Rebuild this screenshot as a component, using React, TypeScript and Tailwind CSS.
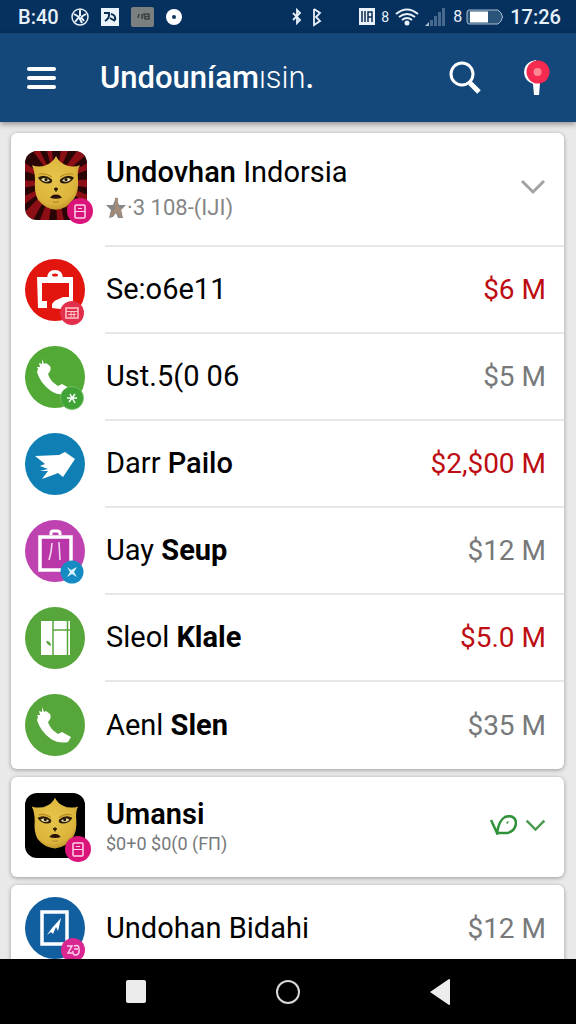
import type { ReactNode } from "react"
import clsx from "clsx"

type Item = {
  name: ReactNode
  amount: string
  due?: boolean
  icon: ReactNode
}

function MaskFace({ striped }: { striped?: boolean }) {
  return (
    <svg viewBox="0 0 62 68" preserveAspectRatio="none" className="block size-full" aria-hidden="true">
      <defs>
        <radialGradient id="gold" cx="45%" cy="40%" r="65%">
          <stop offset="0" stopColor="#e6c54a" />
          <stop offset="0.75" stopColor="#dcb43c" />
          <stop offset="1" stopColor="#b98c24" />
        </radialGradient>
      </defs>
      <rect width="62" height="68" fill={striped ? "#2a0506" : "#000"} />
      {striped && (
        <g fill="#8c0f16">
          <path d="M30 30 L8 0 L15 0Z" />
          <path d="M30 30 L22 0 L27 0Z" />
          <path d="M30 30 L36 0 L43 0Z" />
          <path d="M30 30 L52 0 L62 0 L62 3Z" />
          <path d="M30 30 L62 12 L62 19Z" />
          <path d="M30 30 L62 28 L62 36Z" />
          <path d="M30 30 L62 43 L62 52Z" />
          <path d="M30 30 L56 68 L47 68Z" />
          <path d="M30 30 L39 68 L32 68Z" />
          <path d="M30 30 L24 68 L15 68Z" />
          <path d="M30 30 L8 68 L0 66 L0 60Z" />
          <path d="M30 30 L0 52 L0 44Z" />
          <path d="M30 30 L0 36 L0 29Z" />
          <path d="M30 30 L0 20 L0 12Z" />
        </g>
      )}
      <path
        d="M7 14 Q16 17 23 13 Q28 11 31 5 Q34 11 39 13 Q46 17 55 14 Q52 19 53 28 Q54 40 49 47 Q42 57 31 58 Q20 57 13 48 Q9 41 10 29 Q10 20 7 14Z"
        fill="url(#gold)"
      />
      <path d="M14 23 Q21 21 27 26 M48 23 Q41 21 35 26" stroke="#b98a22" strokeWidth="1.200" fill="none" />
      <path d="M13 26 Q20 22 27 28 Q28 32 23 32 Q16 32 13 26Z M49 26 Q42 22 35 28 Q34 32 39 32 Q46 32 49 26Z" fill="#2b1c08" />
      <path d="M16 28 Q20 25 25 29 Q20 32 16 28Z M46 28 Q42 25 37 29 Q42 32 46 28Z" fill="#ecdda4" />
      <circle cx="21" cy="28" r="1.500" fill="#17100a" />
      <circle cx="41" cy="28" r="1.500" fill="#17100a" />
      <path d="M31 36 v4 M29 37.500 h4" stroke="#2b1c08" strokeWidth="1.800" />
      <path d="M25 46 Q28 42 31 43 Q34 42 37 46 Q31 48 25 46Z" fill="#2a1208" />
      <path d="M28 50 Q31 51 34 50" stroke="#b08424" fill="none" />
    </svg>
  )
}

function Disc({ fill, children }: { fill: string; children: ReactNode }) {
  return (
    <svg viewBox="0 0 60 64" className="block h-16 w-[60px] overflow-visible" aria-hidden="true">
      <ellipse cx="30" cy="31" rx="30" ry="31" fill={fill} />
      {children}
    </svg>
  )
}

function BriefcaseIcon() {
  return (
    <Disc fill="#e2150f">
      <path d="M22 20 Q22 11 30 11 Q38 11 38 20Z" fill="#fff" />
      <ellipse cx="30" cy="16" rx="3" ry="1.500" fill="#e2150f" />
      <path d="M12 18 H48 V44 Q41 49 35 50 L27 49 V43 L38 38 H44 V24 H17 V42 H22 V49 H13Z" fill="#fff" />
      <path d="M17 24 H44 V36 L37 38 L31 40 L27 45 L24 42 H17Z" fill="#e2150f" />
      <circle cx="47" cy="54" r="12" fill="#e2304c" />
      <rect x="41" y="49" width="12" height="10" fill="none" stroke="#ffc3c8" strokeWidth="1.500" />
      <path d="M41 52.500 h12 M43 55.500 h8 M46 53 v5 M49 53 v5" stroke="#ffc3c8" strokeWidth="1" />
    </Disc>
  )
}

const handset =
  "M17 13 L19 18 L21 17 L25 20 Q27 24 23 28 Q25 35 33 40 L37 38 L46 43 L43 48 Q34 50 26 45 Q15 37 12 26 L13 23 L12 21 L15 21 L14 17 L17 18Z"

function PhoneIcon({ badge }: { badge?: boolean }) {
  return (
    <Disc fill={badge ? "#52a935" : "#57a63c"}>
      <path d={handset} fill="#fff" />
      {badge && (
        <>
          <circle cx="47" cy="52" r="11.500" fill="#3fa435" stroke="#7cc26c" strokeWidth="0.800" />
          <path d="M42 52 h10 M45 48 l5 9 M50 48 l-6 8" stroke="#fff" strokeWidth="1.500" />
        </>
      )}
    </Disc>
  )
}

function PlaneIcon() {
  return (
    <Disc fill="#107fb5">
      <path d="M10 23 L34 22 L40 19 L50 26 L38 44 L33 40 L28 42 L17 46 L23 38 L15 38 L23 36 L15 33 L20 31Z" fill="#fff" />
    </Disc>
  )
}

function BagIcon() {
  return (
    <Disc fill="#be43b0">
      <path d="M26 15 V13 Q26 11 28 11 H32 Q35 11 35 13 V15" fill="none" stroke="#fff" strokeWidth="3" />
      <rect x="15" y="17" width="31" height="33" fill="#b836a8" stroke="#fff" strokeWidth="3.500" />
      <path d="M27 23 L26 32 L24 40 M34 22 L35 40" fill="none" stroke="#f2d6ef" strokeWidth="1.600" />
      <circle cx="47" cy="52" r="11.500" fill="#168bc3" />
      <path d="M42 47 L46 50 L52 47 L49 52 L52 57 L47 54 L42 57 L45 52Z" fill="#d9f2ff" />
    </Disc>
  )
}

function DoorIcon() {
  return (
    <Disc fill="#57a63c">
      <path d="M16 14 H45 V48 H16Z" fill="#fff" />
      <path d="M28 14 V48 M28 23 H45 M42.500 14 V48" stroke="#57a63c" strokeWidth="1.500" />
      <path d="M21 34 Q26 34 26 39 Q22 38 21 34Z" fill="#57a63c" />
    </Disc>
  )
}

function TabletIcon() {
  return (
    <Disc fill="#115f9f">
      <rect x="17" y="15" width="25" height="32" fill="#115f9f" stroke="#fff" strokeWidth="3.500" />
      <path d="M22 38 L27 31 L36 21 L33 34 L31 30 L28 37 L26 35Z" fill="#fff" />
      <circle cx="48" cy="53" r="12" fill="#da2690" />
      <path d="M42 49 h5 l-4 7 h4 M49 49 q5 -2 5 3 q1 6 -4 6 q-3 -1 -2 -4 M49 52 h4" fill="none" stroke="#fbd0ea" strokeWidth="1.500" />
    </Disc>
  )
}

function PinkBadge() {
  return (
    <svg viewBox="0 0 26 26" className="absolute -right-1.5 -bottom-1 size-[26px]" aria-hidden="true">
      <circle cx="13" cy="13" r="13" fill="#da1478" />
      <rect x="8" y="7" width="10" height="13" rx="1" fill="none" stroke="#ffd3ea" strokeWidth="1.500" />
      <path d="M8 13.500 h10 M11 10.500 h4" stroke="#ffd3ea" strokeWidth="1.200" />
    </svg>
  )
}

function Chevron({ className }: { className: string }) {
  return (
    <svg viewBox="0 0 26 16" className={className} fill="none" stroke="currentColor" strokeWidth="3" aria-hidden="true">
      <path d="M2 2 L13 13 L24 2" />
    </svg>
  )
}

const items: Item[] = [
  { name: "Se:o6e11", amount: "$6 M", due: true, icon: <BriefcaseIcon /> },
  { name: "Ust.5(0 06", amount: "$5 M", icon: <PhoneIcon badge /> },
  { name: <>Darr <span className="font-medium">Pailo</span></>, amount: "$2,$00 M", due: true, icon: <PlaneIcon /> },
  { name: <>Uay <b className="font-bold">Seup</b></>, amount: "$12 M", icon: <BagIcon /> },
  { name: <>Sleol <b className="font-bold">Klale</b></>, amount: "$5.0 M", due: true, icon: <DoorIcon /> },
  { name: <>Aenl <b className="font-bold">Slen</b></>, amount: "$35 M", icon: <PhoneIcon /> },
]

function Row({ item, last }: { item: Item; last?: boolean }) {
  return (
    <li className="flex h-[87px] items-center gap-5 pl-3.5">
      {item.icon}
      <div className={clsx("flex h-full flex-1 items-center justify-between pr-[18px] pl-px", !last && "border-b-2 border-[#e6e7e9]")}>
        <span className="text-[29px]">{item.name}</span>
        <span className={clsx("text-[28px]", item.due ? "text-[#bd0d12]" : "text-[#77797b]")}>{item.amount}</span>
      </div>
    </li>
  )
}

function StatusBar() {
  return (
    <div className="flex h-[33px] shrink-0 items-center justify-between bg-[#06315f] pr-[15px] pl-[18px] text-xl text-[#e8f1fa]">
      <div className="flex items-center gap-3">
        <span className="font-medium">B:40</span>
        <svg viewBox="0 0 18 18" className="size-[18px]" fill="none" stroke="currentColor" strokeWidth="1.500" aria-hidden="true">
          <circle cx="9" cy="9" r="8" />
          <path d="M9 2 V8 M3 6 L8 9 M15 6 L10 9 M4 14 L8 9 L11 15 M13 13 L10 9" strokeWidth="2" />
        </svg>
        <svg viewBox="0 0 18 18" className="size-[18px]" aria-hidden="true">
          <rect width="18" height="18" fill="#eaf3fb" />
          <path d="M3 5 H8 Q9 10 4 13 M10 6 Q15 7 14 12 M9 10 l5 3" fill="none" stroke="#0a2c50" strokeWidth="2" />
        </svg>
        <svg viewBox="0 0 23 20" className="h-5 w-[23px]" aria-hidden="true">
          <rect width="23" height="20" rx="2" fill="#7b7f7f" />
          <path d="M8 7 l-1 4 M11 7 v5 M13 7 h5 v5 h-4 z M13 9.500 h5" fill="none" stroke="#3e4444" strokeWidth="1.600" />
        </svg>
        <svg viewBox="0 0 16 16" className="size-4" aria-hidden="true">
          <circle cx="8" cy="8" r="8" fill="#fff" />
          <circle cx="8" cy="8" r="2" fill="#12365c" />
        </svg>
      </div>
      <svg viewBox="0 0 32 20" className="ml-[72px] h-5 w-8" fill="none" stroke="currentColor" strokeWidth="1.800" aria-hidden="true">
        <path d="M2 6 L9 13 L6 16 V3 L9 6 L2 13" />
        <path d="M23 2 V18 L29 14 L25 10 L29 6 L23 2" />
      </svg>
      <div className="flex items-center gap-1.5">
        <svg viewBox="0 0 16 17" className="h-[17px] w-4" aria-hidden="true">
          <rect width="16" height="17" fill="#eaf3fb" />
          <path d="M3 3 v11 M6 3 v11 M9 14 V4 h4 v10 M9 9 h4" fill="none" stroke="#0a2c50" strokeWidth="1.500" />
        </svg>
        <span className="text-sm">8</span>
        <svg viewBox="0 0 24 18" className="h-[18px] w-6" fill="none" stroke="currentColor" strokeWidth="2" aria-hidden="true">
          <path d="M1 6 Q12 -3 23 6 M4 9 Q12 3 20 9 M7 12 Q12 8 17 12" />
          <circle cx="12" cy="15" r="1.500" fill="currentColor" />
        </svg>
        <svg viewBox="0 0 21 18" className="h-[18px] w-[21px]" fill="#46698d" aria-hidden="true">
          <path d="M0 18 L4 14 V18Z" fill="#a9bdd0" />
          <path d="M5 12 h3 v6 h-3z M9 8 h3 v10 h-3z M13 4 h3 v14 h-3z M17 0 h3 v18 h-3z" />
        </svg>
        <span className="pl-px text-base">8</span>
        <svg viewBox="0 0 38 16" className="-ml-0.5 h-4 w-[38px]" aria-hidden="true">
          <path d="M3 1 H32 L35 4 Q38 8 35 12 L32 15 H3 Q1 15 1 12 V4 Q1 1 3 1Z" fill="#2b547b" stroke="#a9bdd0" />
          <rect x="4" y="2.500" width="18" height="11" fill="#fff" />
        </svg>
        <span className="font-medium">17:26</span>
      </div>
    </div>
  )
}

function Header() {
  return (
    <header className="relative z-10 flex h-[89px] shrink-0 items-center bg-[#14487b] pr-[25px] pl-[27px] text-white shadow-[0_2px_6px_rgba(0,0,0,0.4)]">
      <button type="button" aria-label="Menu" className="flex w-[29px] flex-col gap-[5px]">
        <span className="h-1 w-full rounded-sm bg-white" />
        <span className="h-1 w-full rounded-sm bg-white" />
        <span className="h-1 w-full rounded-sm bg-white" />
      </button>
      <h1 className="ml-11 flex-1 pt-0.5 text-[31px] font-medium">
        Undouníam<span className="font-light">ısin</span>.
      </h1>
      <button type="button" aria-label="Search">
        <svg viewBox="0 0 32 34" className="h-[34px] w-8" fill="none" stroke="currentColor" aria-hidden="true">
          <circle cx="13" cy="13" r="11" strokeWidth="3" />
          <path d="M20 22 L22 20" strokeWidth="3" />
          <path d="M21 22 L30 31" strokeWidth="5" />
        </svg>
      </button>
      <button type="button" aria-label="Location" className="ml-[42px]">
        <svg viewBox="0 0 28 36" className="h-9 w-7" aria-hidden="true">
          <path d="M13 0 Q1 2 1 13 Q2 21 10 24 L11 35 H16 L17 23Z" fill="#fff" />
          <circle cx="15" cy="12" r="11.500" fill="#f52a50" />
          <circle cx="14.500" cy="12" r="4" fill="#ff8795" />
        </svg>
      </button>
    </header>
  )
}

export default function App() {
  return (
    <div className="flex h-screen flex-col overflow-hidden bg-[#e9e9ea] font-[Roboto,sans-serif] text-black">
      <StatusBar />
      <Header />
      <main className="flex min-h-0 flex-1 flex-col gap-2 overflow-hidden pt-[11px] pr-3 pl-[11px]">
        <section className="shrink-0 rounded-md bg-white shadow-[0_1px_4px_rgba(0,0,0,0.35)]">
          <div className="flex h-[114px] gap-[18px] pl-3.5">
            <div className="relative mt-[18px] h-[69px] w-[62px] shrink-0">
              <div className="size-full overflow-hidden rounded-xl">
                <MaskFace striped />
              </div>
              <PinkBadge />
            </div>
            <div className="flex flex-1 items-center justify-between border-b-2 border-[#e6e7e9] pr-[18px] pl-px">
              <div className="pt-0.5">
                <h2 className="text-[29px] leading-9"><span className="font-medium">Undovhan</span> Indorsia</h2>
                <p className="flex items-center text-[22px] leading-9 text-[#858585]">
                  <svg viewBox="0 0 20 22" className="mr-px h-[22px] w-5" aria-hidden="true">
                    <path d="M10 0 L13 8 L20 8 L15 13 L17 21 L12 21 L10 16 L7 20 L3 21 L5 13 L0 8 L7 8Z" fill="#888785" />
                    <path d="M9 1 L12 1 L12 9 L15 12 L16 20 L13 20 L11 14 L6 19 L4 19 L9 11Z" fill="#a58c78" />
                  </svg>
                  <span>·3 108-(IJI)</span>
                </p>
              </div>
              <button type="button" aria-label="Collapse group" className="pb-1 text-[#a3a3a3]">
                <Chevron className="h-4 w-[26px]" />
              </button>
            </div>
          </div>
          <ul>
            {items.map((item, i) => (
              <Row key={item.amount} item={item} last={i === items.length - 1} />
            ))}
          </ul>
        </section>

        <section className="flex h-[100px] shrink-0 gap-5 rounded-md bg-white pl-3.5 shadow-[0_1px_4px_rgba(0,0,0,0.35)]">
          <div className="relative mt-4 h-[65px] w-[60px] shrink-0">
            <div className="size-full overflow-hidden rounded-xl">
              <MaskFace />
            </div>
            <PinkBadge />
          </div>
          <div className="flex flex-1 items-center justify-between pr-[18px] pl-px">
            <div className="pt-0.5">
              <h2 className="text-[29px] leading-8 font-semibold">Umansi</h2>
              <p className="text-lg leading-7 text-[#77797b]">$0+0 $0(0 (FП)</p>
            </div>
            <button type="button" aria-label="Expand group" className="flex items-center gap-2 pb-1 text-[#49984d]">
              <svg viewBox="0 0 27 20" className="h-5 w-[27px]" fill="none" stroke="#30923a" strokeWidth="2.500" aria-hidden="true">
                <path d="M1 5 L7 18 Q9 5 15 2 Q24 -1 26 7 Q26 16 17 18 L8 18" />
                <path d="M17 7 l1 1" />
              </svg>
              <Chevron className="h-[13px] w-[21px]" />
            </button>
          </div>
        </section>

        <section className="shrink-0 rounded-md bg-white shadow-[0_1px_4px_rgba(0,0,0,0.35)]">
          <ul>
            <Row item={{ name: "Undohan Bidahi", amount: "$12 M", icon: <TabletIcon /> }} last />
          </ul>
        </section>
      </main>
      <nav className="relative z-10 grid h-[65px] shrink-0 grid-cols-3 items-center justify-items-center bg-black px-[60px]">
        <button type="button" aria-label="Recent apps" className="h-[23px] w-5 rounded-xs bg-[#ececec]" />
        <button type="button" aria-label="Home" className="size-6 rounded-full border-2 border-[#d8d8d8]" />
        <button type="button" aria-label="Back">
          <svg viewBox="0 0 20 26" className="h-[26px] w-5" aria-hidden="true">
            <path d="M0 13 L19 0 Q20 0 20 1 V25 Q20 26 19 26Z" fill="#ececec" />
          </svg>
        </button>
      </nav>
    </div>
  )
}
